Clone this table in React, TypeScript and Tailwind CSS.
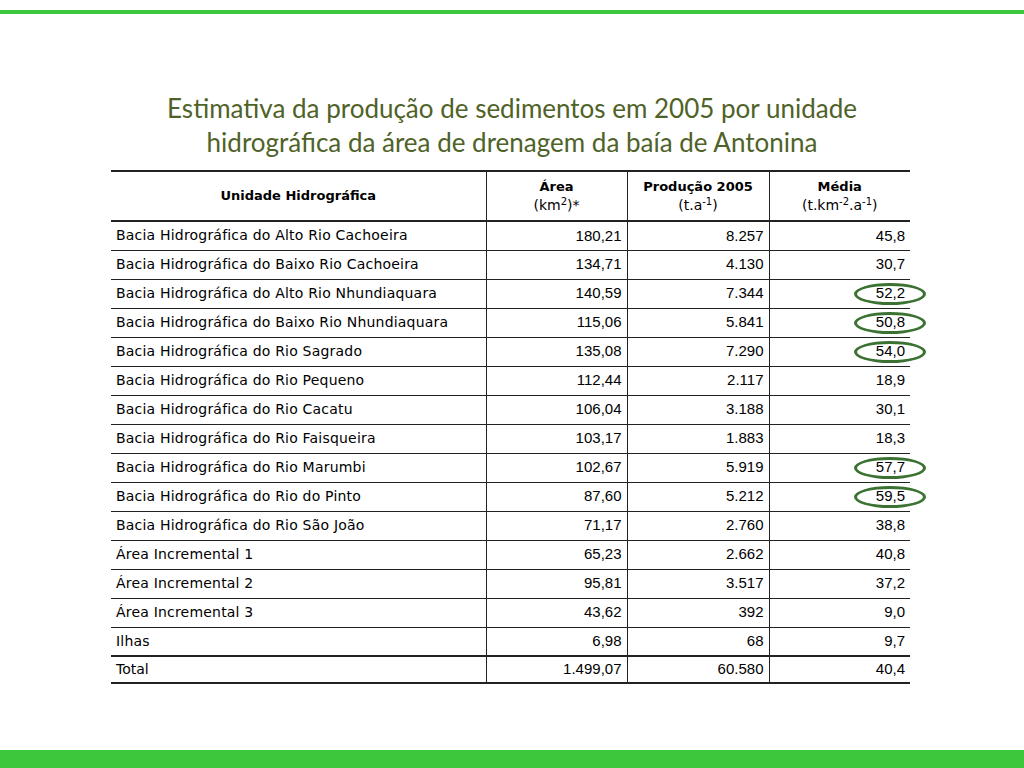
const rows: [string, string, string, string, boolean][] = [
  ["Bacia Hidrográfica do Alto Rio Cachoeira", "180,21", "8.257", "45,8", false],
  ["Bacia Hidrográfica do Baixo Rio Cachoeira", "134,71", "4.130", "30,7", false],
  ["Bacia Hidrográfica do Alto Rio Nhundiaquara", "140,59", "7.344", "52,2", true],
  ["Bacia Hidrográfica do Baixo Rio Nhundiaquara", "115,06", "5.841", "50,8", true],
  ["Bacia Hidrográfica do Rio Sagrado", "135,08", "7.290", "54,0", true],
  ["Bacia Hidrográfica do Rio Pequeno", "112,44", "2.117", "18,9", false],
  ["Bacia Hidrográfica do Rio Cacatu", "106,04", "3.188", "30,1", false],
  ["Bacia Hidrográfica do Rio Faisqueira", "103,17", "1.883", "18,3", false],
  ["Bacia Hidrográfica do Rio Marumbi", "102,67", "5.919", "57,7", true],
  ["Bacia Hidrográfica do Rio do Pinto", "87,60", "5.212", "59,5", true],
  ["Bacia Hidrográfica do Rio São João", "71,17", "2.760", "38,8", false],
  ["Área Incremental 1", "65,23", "2.662", "40,8", false],
  ["Área Incremental 2", "95,81", "3.517", "37,2", false],
  ["Área Incremental 3", "43,62", "392", "9,0", false],
  ["Ilhas", "6,98", "68", "9,7", false],
];

const num = { fontFamily: "'Liberation Sans', Arial, sans-serif" };

export default function App() {
  return (
    <div className="w-[1024px] h-[768px] bg-white flex flex-col overflow-hidden">
      {/* Top bar */}
      <div className="pt-[10px]">
        <div className="h-[4px] bg-[#3cc83c]" />
      </div>

      {/* Title */}
      <h1
        className="mt-[77px] text-center text-[26px] leading-[34px] text-[#4f6228]"
        style={{ fontFamily: "Lato, 'Open Sans', sans-serif" }}
      >
        Estimativa da produção de sedimentos em 2005 por unidade
        <br />
        hidrográfica da área de drenagem da baía de Antonina
      </h1>

      {/* Table */}
      <div className="mt-[11px] ml-[111px] w-[799px]">
        <table
          className="w-full border-collapse text-black"
          style={{ fontFamily: "'DejaVu Sans', sans-serif" }}
        >
          <colgroup>
            <col className="w-[375px]" />
            <col className="w-[141px]" />
            <col className="w-[142px]" />
            <col className="w-[141px]" />
          </colgroup>
          <thead>
            <tr className="h-[50px] border-t-2 border-b-2 border-[#222]">
              <th className="text-[13px] font-bold align-middle">Unidade Hidrográfica</th>
              <th className="border-l border-[#222] text-[14px] font-normal leading-[19px] align-middle">
                <div className="font-bold text-[13px]">Área</div>
                <div>
                  (km<sup className="text-[10px]">2</sup>)*
                </div>
              </th>
              <th className="border-l border-[#222] text-[14px] font-normal leading-[19px] align-middle">
                <div className="font-bold text-[13px]">Produção 2005</div>
                <div>
                  (t.a<sup className="text-[10px]">-1</sup>)
                </div>
              </th>
              <th className="border-l border-[#222] text-[14px] font-normal leading-[19px] align-middle">
                <div className="font-bold text-[13px]">Média</div>
                <div>
                  (t.km<sup className="text-[10px]">-2</sup>.a<sup className="text-[10px]">-1</sup>)
                </div>
              </th>
            </tr>
          </thead>
          <tbody>
            {rows.map(([name, area, prod, media, mark]) => (
              <tr key={name} className="h-[29px] border-b-[1.5px] border-[#222]">
                <td className="pl-[5px] text-[14px] tracking-[0.2px]">{name}</td>
                <td className="border-l border-[#222] pr-[5px] text-right text-[15px]" style={num}>
                  {area}
                </td>
                <td className="border-l border-[#222] pr-[5px] text-right text-[15px]" style={num}>
                  {prod}
                </td>
                <td className="border-l border-[#222] pr-[5px] text-right text-[15px]" style={num}>
                  <span className="relative inline-block">
                    {media}
                    {mark && (
                      <span className="absolute left-1/2 top-1/2 -translate-x-1/2 -translate-y-1/2 w-[72px] h-[22px] rounded-[50%] border-[3px] border-[#3b7232]" />
                    )}
                  </span>
                </td>
              </tr>
            ))}
            <tr className="h-[27px] border-t-2 border-b-2 border-[#222]">
              <td className="pl-[5px] text-[14px]">Total</td>
              <td className="border-l border-[#222] pr-[5px] text-right text-[15px]" style={num}>
                1.499,07
              </td>
              <td className="border-l border-[#222] pr-[5px] text-right text-[15px]" style={num}>
                60.580
              </td>
              <td className="border-l border-[#222] pr-[5px] text-right text-[15px]" style={num}>
                40,4
              </td>
            </tr>
          </tbody>
        </table>
      </div>

      <div className="flex-1" />

      {/* Bottom bar */}
      <div className="h-[18px] bg-[#3cc83c]" />
    </div>
  );
}
